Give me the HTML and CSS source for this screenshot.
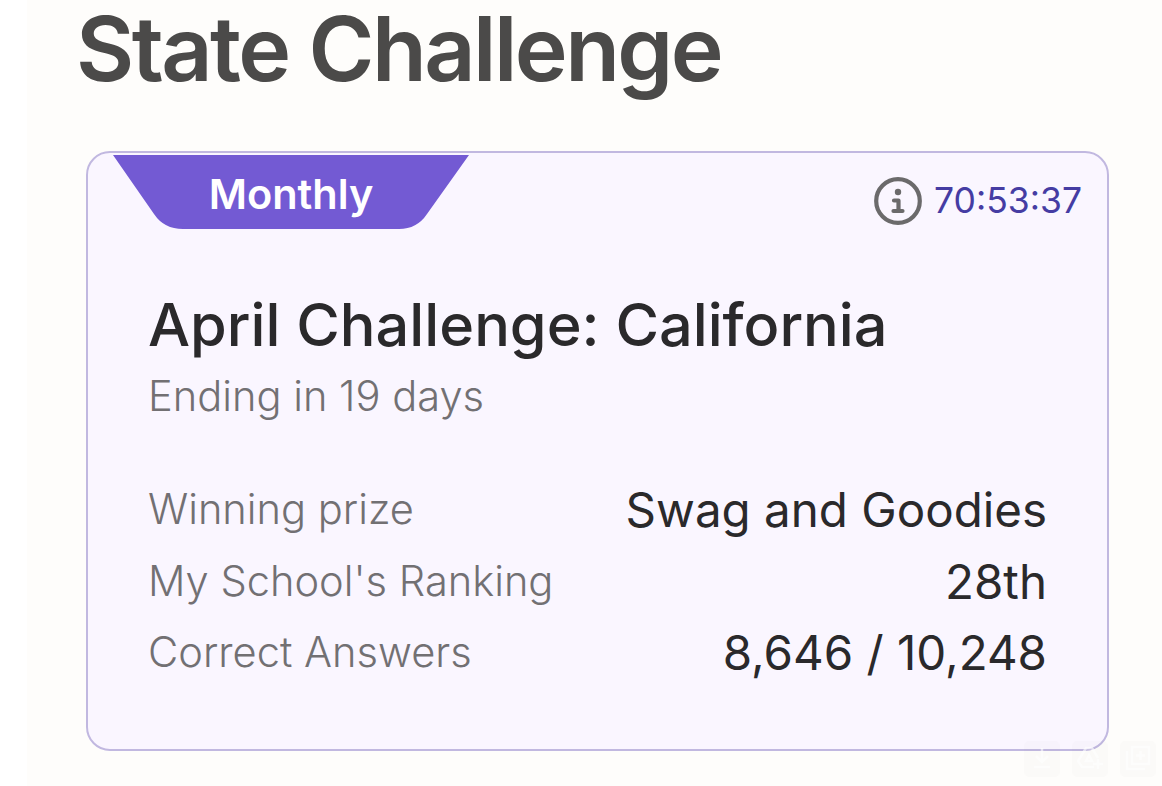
FILE: index.html
```html
<!DOCTYPE html>
<html lang="en">
<head>
  <meta charset="utf-8">
  <title>State Challenge</title>
  <link rel="stylesheet" href="styles.css">
</head>
<body>
  <main class="page">
    <h1>State Challenge</h1>
    <section class="card">
      <div class="card-top">
        <div class="ribbon">
          <svg class="ribbon-shape" viewBox="0 0 356 75"><path d="M0 1H356L314 60Q304 75 286 75H70Q51 75 41 60Z"/></svg>
          <span>Monthly</span>
        </div>
        <div class="timer">
          <svg class="info" viewBox="0 0 48 48">
            <circle cx="24" cy="24" r="21.8"/>
            <path d="M20 23.500H24.500V34M19.500 34H28.500"/>
            <circle class="dot" cx="24" cy="15" r="3.2"/>
          </svg>
          <span>70:53:37</span>
        </div>
      </div>
      <div class="card-body">
        <h2>April Challenge: California</h2>
        <p class="ending">Ending in 19 days</p>
        <dl class="stats">
          <div class="row"><dt>Winning prize</dt><dd>Swag and Goodies</dd></div>
          <div class="row"><dt>My School's Ranking</dt><dd>28th</dd></div>
          <div class="row"><dt>Correct Answers</dt><dd>8,646 / 10,248</dd></div>
        </dl>
      </div>
    </section>
  </main>
  <div class="tools">
    <svg viewBox="0 0 36 36"><path d="M18 7V21M12 15L18 21L24 15M10 26H26"/></svg>
    <svg viewBox="0 0 36 36"><path d="M22 26H10L6 20L14 7H20L26 17M14 20L17 14L20 20ZM26 18V28M21 23H31"/></svg>
    <svg viewBox="0 0 36 36"><path d="M12 6H29V23H12ZM7 10V28H25M20.500 10V19M16 14.500H25"/></svg>
  </div>
</body>
</html>
```
FILE: styles.css
```css
* {
  box-sizing: border-box;
}
html, body {
  height: 100%;
  margin: 0;
}
body {
  font-family: Inter, sans-serif;
  background: #fff;
}
h1, h2, p, dl, dd {
  margin: 0;
}
.page {
  height: 100%;
  margin-left: 27px;
  padding-left: 49px;
  background: #fefdfb;
}
h1 {
  height: 151px;
  font-size: 89.5px;
  line-height: 97px;
  font-weight: 600;
  letter-spacing: -2.55px;
  color: #4b4a49;
}
.card {
  width: 1023px;
  height: 600px;
  margin-left: 10px;
  border: 2px solid #c1b8e0;
  border-radius: 24px;
  background: #faf6ff;
}
.card-top {
  display: flex;
  justify-content: space-between;
  padding: 1px 25px 0;
}
.ribbon {
  display: grid;
  width: 356px;
  height: 75px;
  color: #fff;
  font-size: 41.5px;
  font-weight: 600;
  line-height: 81px;
  text-align: center;
}
.ribbon > * {
  grid-area: 1 / 1;
}
.ribbon-shape {
  width: 356px;
  height: 75px;
  fill: #735ad3;
}
.timer {
  display: flex;
  align-items: center;
  gap: 12px;
  height: 93px;
  color: #453ca3;
  font-size: 35.5px;
}
.info {
  width: 48px;
  height: 48px;
  fill: none;
  stroke: #6b6a6b;
  stroke-width: 4.2;
  stroke-linecap: round;
  stroke-linejoin: round;
}
.info .dot {
  fill: #6b6a6b;
  stroke: none;
}
.card-body {
  padding: 41px 60px 0;
}
h2 {
  font-size: 59.4px;
  line-height: 72px;
  font-weight: 500;
  color: #2a292b;
}
.ending {
  font-size: 41.6px;
  line-height: 72px;
  font-weight: 300;
  color: #727073;
}
.stats {
  margin-top: 42px;
}
.row {
  display: flex;
  justify-content: space-between;
  height: 71.5px;
  line-height: 71px;
}
dt {
  font-size: 41.6px;
  line-height: 70px;
  font-weight: 300;
  color: #727073;
}
dd {
  font-size: 47.5px;
  color: #2a292b;
}
/* faint buttons floating over the bottom right corner */
.tools {
  position: absolute;
  right: 6px;
  bottom: 9px;
  display: flex;
  gap: 12px;
}
.tools svg {
  width: 36px;
  height: 36px;
  border-radius: 5px;
  background: rgba(120, 120, 120, 0.02);
  fill: none;
  stroke: rgba(255, 255, 255, 0.6);
  stroke-width: 2.5;
}
```
